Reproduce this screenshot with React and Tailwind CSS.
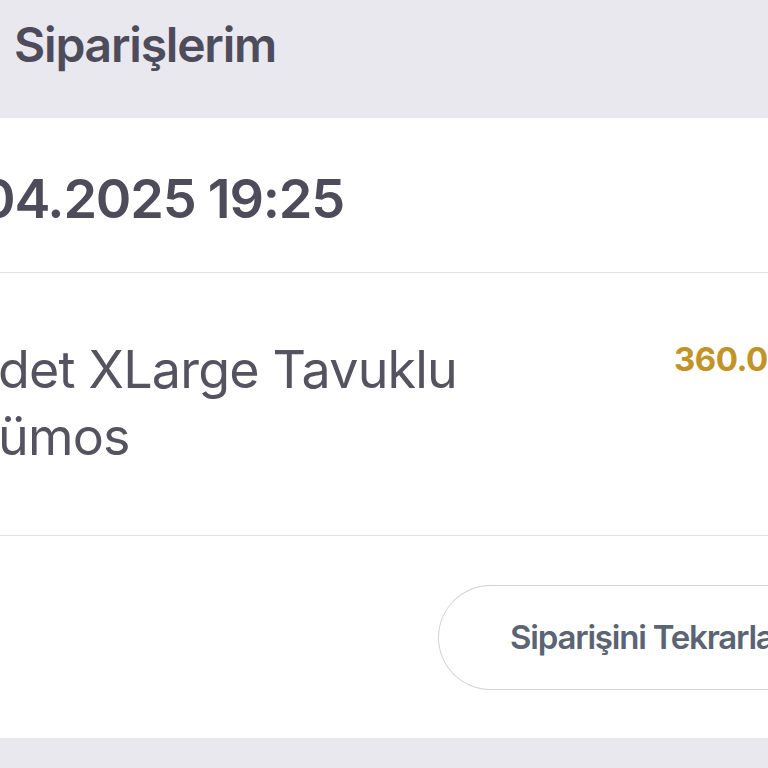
export default function App() {
    return (
        <div className="w-[768px] h-[768px] overflow-hidden bg-[#e9e8ef] font-['Inter',sans-serif]">
            {/* Header */}
            <div className="h-[118px] pl-[14px] pt-[21px]">
                <h1 className="text-[48px] leading-[48px] font-semibold tracking-[-1.2px] text-[#4e4c5a]">Siparişlerim</h1>
            </div>

            {/* Order card */}
            <div className="bg-white h-[620px] flex flex-col overflow-hidden">
                <div className="h-[155px] pt-[54px] border-b-[1.5px] border-[#e3e3e6]">
                    <div className="-ml-[20px] text-[54px] leading-[54px] font-semibold tracking-[-1.2px] text-[#4e4c5a] whitespace-nowrap">
                        04.2025 19:25
                    </div>
                </div>

                <div className="h-[263px] flex justify-between border-b-[1.5px] border-[#e3e3e6]">
                    <div className="pt-[63px] -ml-[2px] text-[52px] leading-[67px] tracking-[-0.8px] text-[#55535f] whitespace-nowrap">
                        det XLarge Tavuklu
                        <br />
                        ümos
                    </div>
                    <div className="pt-[70px] w-[94px] shrink-0 text-[33px] leading-[33px] font-bold tracking-[-0.5px] text-[#c29326] whitespace-nowrap">
                        360.00 TL
                    </div>
                </div>

                <div className="flex-1 flex justify-end pt-[49px]">
                    <button className="h-[105px] w-[330px] shrink-0 rounded-l-full border-[1.5px] border-r-0 border-[#d2d2d6] bg-white pl-[71px] text-left text-[33px] font-semibold tracking-[-1.2px] text-[#5a6475] whitespace-nowrap">
                        Siparişini Tekrarla
                    </button>
                </div>
            </div>
        </div>
    );
}
